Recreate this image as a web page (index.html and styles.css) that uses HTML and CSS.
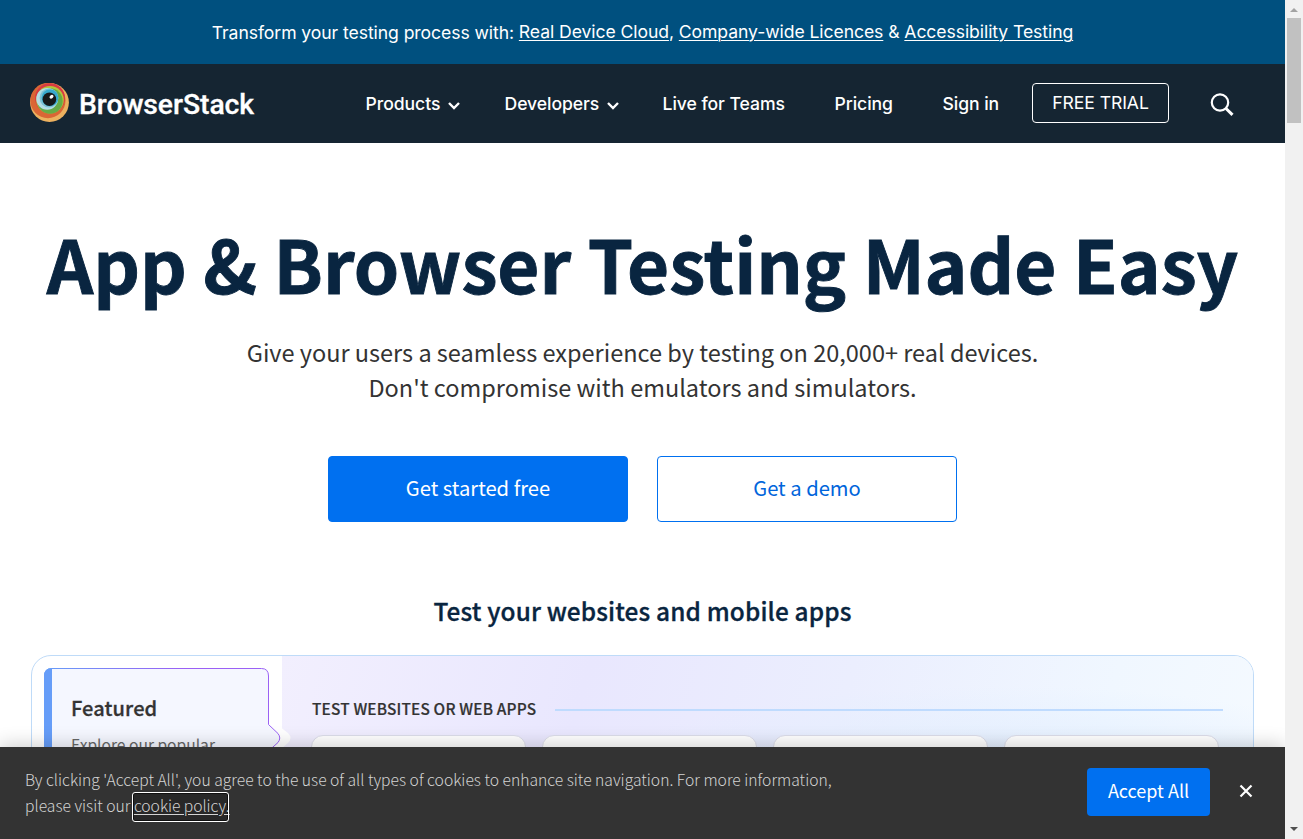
FILE: index.html
```html
<!DOCTYPE html>
<html lang="en">
<head>
<meta charset="utf-8">
<title>BrowserStack</title>
<link rel="stylesheet" href="styles.css">
</head>
<body>
<div class="window">
  <div class="page">
    <div class="promo"><span class="promo-lead">Transform your testing process with:</span>&nbsp;<a href="#">Real Device Cloud</a><span>,&nbsp;</span><a href="#">Company-wide Licences</a><span>&nbsp;&amp;&nbsp;</span><a href="#">Accessibility Testing</a></div>
    <header class="header">
      <a class="brand" href="#">
        <svg class="brand-mark" width="40" height="40" viewBox="0 0 40 40">
          <circle cx="19.5" cy="19.5" r="19.4" fill="#ecb15f"/>
          <circle cx="17.9" cy="17.600" r="17.6" fill="#da6635"/>
          <circle cx="20" cy="15.2" r="15" fill="#d93a42"/>
          <circle cx="20" cy="16.7" r="13.800" fill="#b3c63b"/>
          <circle cx="20" cy="18" r="12.700" fill="#66ab47"/>
          <circle cx="17.2" cy="15.8" r="10.9" fill="#b5dce5"/>
          <circle cx="19" cy="15" r="9.4" fill="#7cc1d5"/>
          <circle cx="20" cy="14.8" r="8.4" fill="#37a9cd"/>
          <circle cx="19.4" cy="16.2" r="6.8" fill="#17191b"/>
          <ellipse cx="21.5" cy="13.7" rx="2.2" ry="1.7" fill="#fff" transform="rotate(-40 21.5 13.7)"/>
        </svg>
        <svg class="brand-name" width="176" height="34" viewBox="0 0 176 34"><text x="-1" y="27.500" textLength="175" lengthAdjust="spacingAndGlyphs">BrowserStack</text></svg>
      </a>
      <nav class="nav">
        <a class="products" href="#">Products<svg width="12" height="8" viewBox="0 0 12 8"><path d="M1 1L6 6L11 1"/></svg></a>
        <a class="developers" href="#">Developers<svg width="12" height="8" viewBox="0 0 12 8"><path d="M1 1L6 6L11 1"/></svg></a>
        <a class="teams" href="#">Live for Teams</a>
        <a class="pricing" href="#">Pricing</a>
        <a class="signin" href="#">Sign in</a>
      </nav>
      <a class="trial" href="#">FREE TRIAL</a>
      <svg class="search" width="26" height="26" viewBox="0 0 26 26"><circle cx="11" cy="10.500" r="8.200"/><path d="M17 16.500L23.500 22.800" stroke-width="3"/></svg>
    </header>
    <main class="hero">
      <h1>App &amp; Browser Testing Made Easy</h1>
      <p class="lead">Give your users a seamless experience by testing on 20,000+ real devices.<br>Don't compromise with emulators and simulators.</p>
      <div class="actions"><a class="btn primary" href="#">Get started free</a><a class="btn outline" href="#">Get a demo</a></div>
      <h2>Test your websites and mobile apps</h2>
      <section class="panel">
        <div class="tabs">
          <svg class="tab-shape" width="260" height="200" viewBox="0 0 260 200">
            <defs><linearGradient id="edge" x1="0" x2="1"><stop offset="0" stop-color="#669df8"/><stop offset=".6" stop-color="#9b5ff5"/><stop offset="1" stop-color="#9b62f5"/></linearGradient></defs>
            <path d="M226 56Q238 62 247 70L256 77Q261 82 256 87L235 105H225Z" fill="#fff"/>
            <path d="M12.500 190V20Q12.500 12.500 20 12.500H229.500Q236.500 12.500 236.500 20V68.500L246 77.500Q249.500 82 246 86.500L236.500 95V190" fill="#f5f7ff" stroke="url(#edge)"/>
            <path d="M12 190V20Q12 12 20 12V190Z" fill="#669df8"/>
          </svg>
          <div class="tab"><h3>Featured</h3><p>Explore our popular</p></div>
        </div>
        <div class="products-area">
          <div class="section-title"><h4>TEST WEBSITES OR WEB APPS</h4><span class="rule"></span></div>
          <div class="cards"><div class="card"></div><div class="card"></div><div class="card"></div><div class="card"></div></div>
        </div>
      </section>
    </main>
    <div class="cookie">
      <p>By clicking 'Accept All', you agree to the use of all types of cookies to enhance site navigation. For more information,<br>please visit our <a href="#">cookie policy.</a></p>
      <a class="accept" href="#">Accept All</a>
      <svg class="close" width="14" height="14" viewBox="0 0 14 14"><path d="M1.500 1.500L12.500 12.500M12.500 1.500L1.500 12.500"/></svg>
    </div>
  </div>
  <div class="scrollbar">
    <svg width="18" height="18"><path d="M5 12L9 8L13 12Z" fill="#a3a3a3"/></svg>
    <div class="thumb"></div>
    <svg class="down" width="18" height="18"><path d="M5 6H13L9 10Z" fill="#505050"/></svg>
  </div>
</div>
</body>
</html>
```
FILE: styles.css
```css
* { box-sizing: border-box; }
body { margin: 0; overflow: hidden; background: #fff; font-family: "Noto Sans CJK SC", sans-serif; color: #333; }
a { color: inherit; text-decoration: none; }
h1, h2, h3, h4, p { margin: 0; white-space: nowrap; }
.window { display: flex; width: 1303px; height: 839px; }
.page { position: relative; width: 1285px; height: 839px; overflow: hidden; }
.promo { height: 64px; display: flex; justify-content: center; background: #00507f; color: #fff; font: 17.6px/63px Inter, sans-serif; letter-spacing: -.08px; white-space: nowrap; }
.promo-lead { line-height: 65px; }
.promo a { text-decoration: underline; text-underline-offset: 2px; text-decoration-thickness: 1px; }
.header { height: 79px; display: flex; background: #152532; color: #fff; font: 500 17.600px/80px Inter, sans-serif; letter-spacing: -.06px; white-space: nowrap; }
.brand { display: flex; width: 335.500px; padding: 19px 0 0 30px; }
.brand-mark { margin-right: 10px; }
.brand-name { margin-top: 3px; overflow: visible; fill: #fff; stroke: #fff; stroke-width: .3; font: 500 27px Roboto, sans-serif; }
.nav { display: flex; width: 696.500px; padding-left: 30px; }
.nav a svg { margin-left: 8px; overflow: visible; fill: none; stroke: #fff; stroke-width: 2.400; }
.products { width: 139px; }
.developers { width: 158px; }
.teams { width: 172px; }
.pricing { width: 108px; }
.trial { width: 137px; height: 40px; margin-top: 19px; border: 1px solid #fff; border-radius: 4px; line-height: 37px; text-align: center; font-weight: 400; }
.search { margin: 28px 0 0 40px; fill: none; stroke: #fff; stroke-width: 2.200; }
.hero { display: flex; flex-direction: column; align-items: center; }
h1 { margin-top: 70px; color: #092540; font-size: 72.650px; line-height: 100px; font-weight: 700; -webkit-text-stroke: .9px; }
.lead { margin-top: 22px; text-align: center; font-size: 23.500px; line-height: 35px; }
.actions { display: flex; gap: 29px; margin-top: 51px; }
.btn { width: 300px; height: 66px; border: 1px solid #0070f0; border-radius: 4px; text-align: center; font-size: 20.200px; line-height: 62px; }
.primary { background: #0070f0; color: #fff; }
.outline { color: #0065db; }
h2 { margin-top: 69px; color: #092540; font-size: 24.400px; line-height: 40px; font-weight: 500; letter-spacing: .14px; -webkit-text-stroke: .3px; }
.panel { display: flex; width: 1223px; height: 500px; margin-top: 24px; border: 1px solid #bfdbf8; border-radius: 20px; }
.tabs { width: 250px; display: grid; flex: none; z-index: 1; }
.tab-shape, .tab { grid-area: 1 / 1; z-index: 1; }
.tab-shape { overflow: visible; }
.tab { padding: 34px 0 0 39px; }
h3 { font-size: 20px; line-height: 36px; font-weight: 500; letter-spacing: .12px; -webkit-text-stroke: .3px; }
.tab p { margin-top: 5px; color: #666; font-size: 15.600px; line-height: 26px; }
.products-area { flex: 1; padding: 38px 30px 0; border-radius: 0 19px 19px 0; background: radial-gradient(ellipse 420px 100px at 720px 130px, #dfedff 0%, #dfedff00 100%), linear-gradient(105deg, #f2effe 0%, #e9e7fe 28%, #ebeefe 52%, #f0f7ff 76%, #f7fbff 100%); }
.section-title { display: flex; align-items: center; height: 30px; }
h4 { width: 243px; font-size: 15.400px; line-height: 28px; padding-bottom: 2px; font-weight: 500; letter-spacing: .18px; -webkit-text-stroke: .2px; }
.rule { flex: 1; height: 2px; margin-top: 2px; background: #bfdbfe; }
.cards { display: grid; grid-template-columns: repeat(4, 215px); gap: 16px; margin: 11px 0 0 -1px; }
.card { height: 200px; background: #fff; border: 1px solid #dcddea; border-radius: 12px; }
.cookie { position: absolute; z-index: 3; left: 0; bottom: 0; width: 1285px; height: 92px; display: flex; background: #333; color: #d3d3d3; box-shadow: 0 -2px 18px #0003; }
.cookie p { width: 1087px; padding: 20px 0 0 25px; font-size: 15.700px; line-height: 26px; font-weight: 300; }
.cookie p a { display: inline-block; width: 95px; height: 28px; margin: -1px -2px 0 -1px; padding: 0; line-height: 24px; text-decoration: underline; text-underline-offset: 2px; background: #282828; outline: 1.500px solid #fff; border: 1px solid #101010; border-radius: 2px; letter-spacing: -.05px; }
.accept { width: 123px; height: 48px; margin-top: 21px; border-radius: 4px; background: #0070f0; color: #fff; text-align: center; font-size: 18px; line-height: 45px; }
.close { margin: 37px 0 0 29px; fill: none; stroke: #fff; stroke-width: 2.200; }
.scrollbar { width: 18px; display: flex; flex-direction: column; background: #f1f1f1; }
.thumb { width: 14px; height: 105px; margin-left: 2px; background: #c1c1c1; }
.down { margin-top: auto; }
```
